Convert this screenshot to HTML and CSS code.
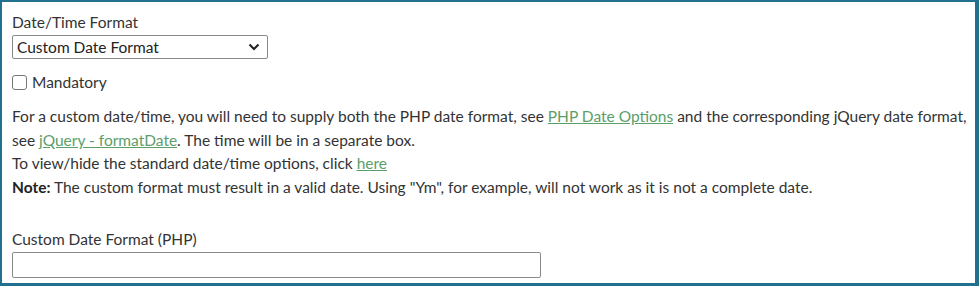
FILE: index.html
```html
<!DOCTYPE html>
<html>
<head>
<meta charset="utf-8">
<link rel="stylesheet" href="styles.css">
</head>
<body>
<div class="panel">
  <div class="field">
    <label class="label">Date/Time Format</label>
    <div class="select">
      <span>Custom Date Format</span>
      <svg class="chev" width="12" height="8" viewBox="0 0 12 8"><path d="M1.5 1.5 L6 6 L10.5 1.5" fill="none" stroke="#222" stroke-width="2"/></svg>
    </div>
  </div>
  <div class="check">
    <span class="box"></span>
    <span>Mandatory</span>
  </div>
  <div class="help">
    <p>For a custom date/time, you will need to supply both the PHP date format, see <a href="#">PHP Date Options</a> and the corresponding jQuery date format, see <a href="#">jQuery - formatDate</a>. The time will be in a separate box.</p>
    <p>To view/hide the standard date/time options, click <a href="#">here</a></p>
    <p><b>Note:</b> The custom format must result in a valid date. Using "Ym", for example, will not work as it is not a complete date.</p>
  </div>
  <div class="field field-php">
    <label class="label">Custom Date Format (PHP)</label>
    <div class="input"></div>
  </div>
</div>
</body>
</html>
```
FILE: styles.css
```css
html, body { margin: 0; padding: 0; background: #fff; }
body {
  font-family: "Lato", "Liberation Sans", sans-serif;
  font-size: 15.5px;
  color: #333;
}
.panel {
  box-sizing: border-box;
  width: 979px;
  height: 286px;
  border-style: solid;
  border-color: #21708f;
  border-width: 2px 4px 3px 2px;
  padding: 10px 6px 0 10px;
}
.label { display: block; line-height: 20px; }
.select {
  box-sizing: border-box;
  width: 256px;
  height: 24px;
  margin-top: 3px;
  border: 1px solid #8a8a8a;
  border-radius: 2px;
  display: flex;
  align-items: center;
  justify-content: space-between;
  padding: 0 7px 0 4px;
  color: #222;
}
.check {
  display: flex;
  align-items: center;
  gap: 5px;
  margin-top: 13px;
  line-height: 20px;
}
.box {
  width: 13px;
  height: 13px;
  border: 1px solid #767676;
  border-radius: 3px;
}
.help { margin-top: 13px; }
.help p { margin: 0; line-height: 23.5px; }
.help a { color: #5c9e6a; text-decoration: underline; }
.help b { font-weight: 700; color: #222; }
.field-php { margin-top: 30px; }
.input {
  box-sizing: border-box;
  width: 529px;
  height: 26px;
  margin-top: 3px;
  border: 1px solid #8a8a8a;
  border-radius: 2px;
}
```
